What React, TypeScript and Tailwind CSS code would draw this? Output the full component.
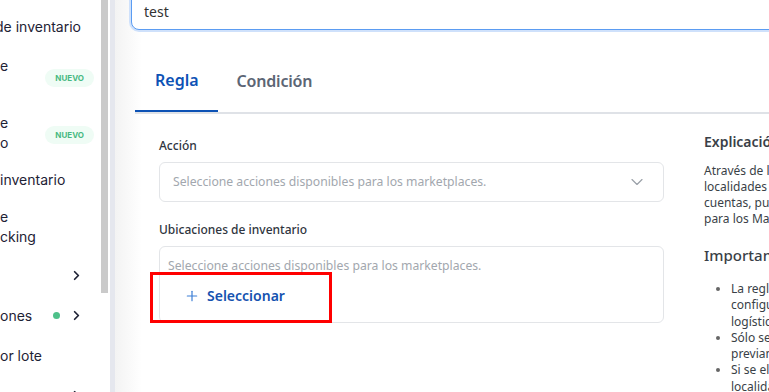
import { ChevronDown, ChevronRight, Plus } from "lucide-react";

const sideItems = [
  { lines: ["de inventario"], h: "h-[40px]", offset: "-ml-[5px]" },
  { lines: ["e", ""], h: "h-[58px]", badge: true },
  { lines: ["e", "o"], h: "h-[56px]", badge: true },
  { lines: ["inventario"], h: "h-[38px]" },
  { lines: ["e", "cking"], h: "h-[56px]" },
  { lines: [""], h: "h-[40px]", chevron: true },
  { lines: ["ones"], h: "h-[41px]", chevron: true, dot: true },
  { lines: ["or lote"], h: "h-[39px]" },
  { lines: [""], h: "h-[40px]", chevron: true },
];

function Sidebar() {
  return (
    <div className="relative flex h-full w-[110px] shrink-0 overflow-hidden bg-white">
      <div className="flex w-[101px] shrink-0 flex-col pt-[7px] font-['Inter',sans-serif] text-[14px] leading-[20px] text-[#1e2235]">
        {sideItems.map((it, i) => (
          <div key={i} className={`flex shrink-0 items-center justify-between pr-[17px] ${it.h}`}>
            <div className={it.offset ?? ""}>
              {it.lines.map((l, j) => (
                <div key={j} className="h-[20px] whitespace-nowrap">{l}</div>
              ))}
            </div>
            <div className="flex items-center gap-[9px]">
              {it.badge && (
                <span className="-mr-[10px] mt-[3px] rounded-full bg-[#effcf5] px-[10px] py-[3px] text-[8px] font-bold leading-[12px] text-[#48b982]">
                  NUEVO
                </span>
              )}
              {it.dot && <span className="h-[7px] w-[7px] rounded-full bg-[#4ec18a]" />}
              {it.chevron && <ChevronRight className="h-[15px] w-[15px] text-[#1e2235]" strokeWidth={2.8} />}
            </div>
          </div>
        ))}
      </div>
      <div className="absolute right-[2px] top-0 h-[293px] w-[7px] bg-[#cacaca]" />
    </div>
  );
}

export default function App() {
  return (
    <div className="flex h-[392px] w-[769px] overflow-hidden bg-white">
      <Sidebar />
      <div className="w-[5px] shrink-0 bg-[#e5e7ee]" />
      <main className="w-[900px] shrink-0 bg-gradient-to-r from-[#f3f3f3] via-white via-[3%] to-white pl-[16px] font-['Noto_Sans',sans-serif]">
        <div className="-mt-[8px] flex h-[38px] items-center rounded-[8px] border border-[#5b9cf2] bg-white px-[12px] text-[14px] text-[#333] ring-2 ring-[#cfe1fb]">
          test
        </div>

        <div className="ml-[4px] mt-[20px] flex border-b-2 border-[#dfe2e7]">
          <div className="-mb-[2px] flex h-[62px] items-center border-b-2 border-[#0d52b5] pl-[20px] pr-[19px] text-[16px] font-semibold text-[#0d52b5]">
            Regla
          </div>
          <div className="flex h-[62px] items-center px-[19px] text-[16px] font-semibold tracking-[-0.2px] text-[#5c6675]">
            Condición
          </div>
        </div>

        <div className="ml-[4px] flex gap-[40px] pl-[24px] pt-[24px]">
          <div className="w-[505px] shrink-0">
            <div className="h-[16px] text-[12px] font-medium leading-[16px] text-[#2f3540]">Acción</div>
            <div className="mt-[8px] flex h-[40px] items-center justify-between rounded-[6px] border border-[#e3e5e8] bg-white pl-[13px] pr-[16px]">
              <span className="text-[12.2px] text-[#a2a7ae]">Seleccione acciones disponibles para los marketplaces.</span>
              <ChevronDown className="h-[20px] w-[20px] text-[#9aa0a8]" strokeWidth={1.4} />
            </div>

            <div className="mt-[20px] h-[16px] text-[12px] font-medium leading-[16px] text-[#2f3540]">
              Ubicaciones de inventario
            </div>
            <div className="relative mt-[8px] h-[77px] rounded-[6px] border border-[#e3e5e8] bg-white px-[8px] pt-[9px]">
              <div className="text-[12.2px] leading-[20px] text-[#a2a7ae]">
                Seleccione acciones disponibles para los marketplaces.
              </div>
              <div className="ml-[16px] mt-[9px] flex items-center gap-[7px] text-[14px] font-semibold text-[#1552b0]">
                <Plus className="h-[16px] w-[16px] text-[#3d7fd6]" strokeWidth={1.8} />
                Seleccionar
              </div>
              <div className="absolute left-[-10px] top-[25px] h-[51px] w-[182px] border-[3px] border-[#ff0000]" />
            </div>
          </div>

          <div className="w-[300px] shrink-0 whitespace-nowrap text-[#3a3f47]">
            <div className="mt-[-7px] text-[14px] font-semibold leading-[22px]">Explicación</div>
            <p className="mt-[10px] text-[12px] leading-[16px]">
              Através de las reglas de inventario podrá configurar las
              <br />
              localidades de inventario que se utilizarán en sus
              <br />
              cuentas, pudiendo así definir el stock disponible
              <br />
              para los Marketplaces.
            </p>
            <div className="mt-[17px] text-[15px] font-medium leading-[22px]">Importante</div>
            <ul className="ml-[17px] mt-[15px] list-disc pl-[10px] text-[12px] leading-[16.3px] marker:text-[#666]">
              <li>
                La regla debe estar correctamente
                <br />
                configurada con sus ubicaciones
                <br />
                logísticas.
              </li>
              <li>
                Sólo se pueden seleccionar ubicaciones
                <br />
                previamente creadas.
              </li>
              <li>
                Si se elimina una regla, las
                <br />
                localidades quedarán sin asignar.
              </li>
            </ul>
          </div>
        </div>
      </main>
    </div>
  );
}
